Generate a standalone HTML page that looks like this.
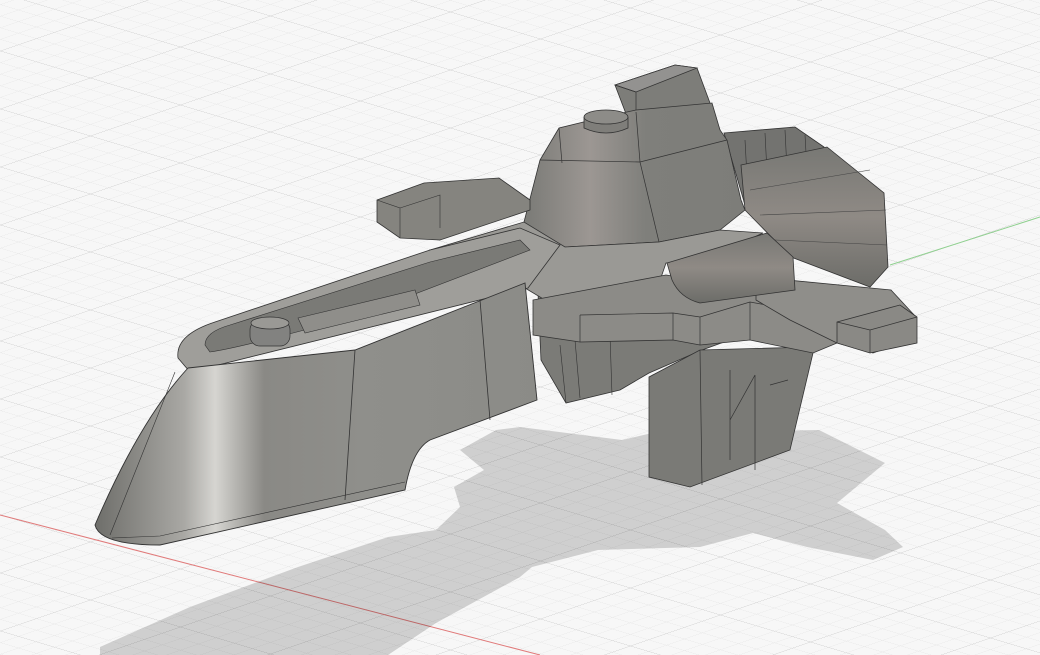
<!DOCTYPE html>
<html><head><meta charset="utf-8"><style>
html,body{margin:0;padding:0;background:#f7f7f7;width:1040px;height:655px;overflow:hidden}
svg{display:block}
</style></head><body>
<svg width="1040" height="655" viewBox="0 0 1040 655" xmlns="http://www.w3.org/2000/svg">
<defs>
<pattern id="g" width="20" height="20" patternUnits="userSpaceOnUse" patternTransform="matrix(0.9 0.27 0.9 -0.31 0 515)">
<path d="M0 0H20M0 0V20" stroke="#e2e2e2" stroke-width="1" fill="none"/>
</pattern>
<pattern id="g5" width="100" height="100" patternUnits="userSpaceOnUse" patternTransform="matrix(0.9 0.27 0.9 -0.31 0 515)">
<path d="M0 0H100M0 0V100" stroke="#c6c6c6" stroke-width="1.1" fill="none"/>
</pattern>
<linearGradient id="nose" x1="95" y1="0" x2="540" y2="0" gradientUnits="userSpaceOnUse">
<stop offset="0" stop-color="#6e6e6a"/><stop offset="0.2" stop-color="#a9a8a4"/><stop offset="0.27" stop-color="#d6d5d1"/><stop offset="0.38" stop-color="#8a8985"/><stop offset="0.6" stop-color="#8f8f8b"/><stop offset="1" stop-color="#8b8b87"/>
</linearGradient>
<linearGradient id="cyl" x1="0" y1="0" x2="0" y2="1">
<stop offset="0" stop-color="#787874"/><stop offset="0.5" stop-color="#8f8a85"/><stop offset="1" stop-color="#6c6c68"/>
</linearGradient>
<linearGradient id="tur" x1="0" y1="0" x2="1" y2="0">
<stop offset="0" stop-color="#7a7a76"/><stop offset="0.3" stop-color="#9c9793"/><stop offset="0.55" stop-color="#7f7f7b"/><stop offset="1" stop-color="#7d7d79"/>
</linearGradient>
</defs>
<rect width="1040" height="655" fill="#f7f7f7"/>
<rect width="1040" height="655" fill="url(#g)"/>
<rect width="1040" height="655" fill="url(#g5)"/>
<line x1="0" y1="515" x2="540" y2="655" stroke="#e07a7a" stroke-width="1"/>
<line x1="890" y1="265" x2="1040" y2="217" stroke="#8fd08f" stroke-width="1"/>
<!-- shadow -->
<path d="M100 655 L100 647 L190 607 L298 567 L388 537 L436 530 L460 507 L454 487 L484 470 L460 450 L496 430 L520 427 L622 440 L652 433 L819 430 L885 463 L837 503 L885 530 L903 547 L873 560 L807 547 L753 533 L700 547 L598 550 L532 567 L520 577 L436 623 L388 655 Z" fill="#000" fill-opacity="0.16"/>
<!-- rear fins -->
<path d="M724 133 L795 127 L824 147 L827 190 L745 205 Z" fill="#737370" stroke="#333" stroke-width="0.8"/>
<path d="M745 140 L748 195 M765 133 L768 192 M785 130 L788 190 M805 135 L808 188" stroke="#333" stroke-width="0.6"/>
<!-- right cylinder -->
<path d="M741 165 L827 147 L884 193 L888 267 L870 287 L791 257 L745 210 Z" fill="url(#cyl)" stroke="#333" stroke-width="0.8"/>
<path d="M750 190 L870 170 M760 215 L886 210 M775 240 L887 245" stroke="#444" stroke-width="0.6"/>
<!-- turret top block -->
<path d="M615 85 L675 65 L697 68 L720 130 L636 140 Z" fill="#7d7d79" stroke="#333" stroke-width="0.8"/>
<path d="M615 85 L675 65 L697 68 L636 92 Z" fill="#939290" stroke="#333" stroke-width="0.7"/>
<path d="M615 85 L636 92 L636 140" stroke="#333" stroke-width="0.7" fill="none"/>
<!-- turret -->
<path d="M524 222 L540 160 L559 128 L600 118 L636 110 L712 103 L720 130 L727 140 L741 200 L745 210 L720 230 L659 242 L565 247 L530 238 Z" fill="url(#tur)" stroke="#333" stroke-width="0.8"/>
<path d="M540 160 L640 162 L727 140 M559 128 L562 163 M640 162 L659 242 M636 112 L640 162" stroke="#333" stroke-width="0.7" fill="none"/>
<path d="M584 117 L584 128 Q606 138 628 128 L628 117" fill="#7f7e7a" stroke="#333" stroke-width="0.8"/>
<ellipse cx="606" cy="117" rx="22" ry="7" fill="#8d8c88" stroke="#333" stroke-width="0.8"/>
<!-- left wing -->
<path d="M377 200 L424 183 L499 178 L530 200 L530 210 L440 240 L400 238 L377 222 Z" fill="#85847f" stroke="#333" stroke-width="0.8"/>
<path d="M377 200 L400 208 L400 238 M400 208 L440 195 L440 228" stroke="#333" stroke-width="0.6" fill="none"/>
<!-- underside mid -->
<path d="M538 293 L749 333 L702 350 L649 373 L620 390 L566 403 L541 360 Z" fill="#7b7b77" stroke="#333" stroke-width="0.8"/>
<path d="M560 345 L566 403 M575 340 L580 398 M610 335 L612 395" stroke="#333" stroke-width="0.6"/>
<!-- hanging block -->
<path d="M649 377 L700 350 L810 347 L813 353 L790 450 L690 487 L649 477 Z" fill="#7a7a76" stroke="#333" stroke-width="0.8"/>
<path d="M700 350 L702 485 M730 370 L730 460 M755 375 L755 470 M730 420 L755 375 M770 385 L788 380" stroke="#333" stroke-width="0.7" fill="none"/>
<!-- deck -->
<path d="M430 250 L524 222 L565 247 L659 242 L720 230 L763 233 L700 262 L666 263 L655 295 L600 300 L545 300 L520 285 Z" fill="#9a9995" stroke="#333" stroke-width="0.8"/>
<!-- lower plate -->
<path d="M533 300 L666 275 L760 290 L837 300 L837 343 L813 353 L750 340 L700 345 L673 340 L580 342 L533 335 Z" fill="#8c8b87" stroke="#333" stroke-width="0.8"/>
<path d="M580 315 L673 313 L700 317 L750 302 L810 313 M580 315 L580 342 M673 313 L673 340 M700 317 L700 345 M750 302 L750 340" stroke="#333" stroke-width="0.7" fill="none"/>
<!-- right arm bits -->
<path d="M756 277 L891 290 L916 317 L916 337 L873 353 L837 343 L790 320 L756 300 Z" fill="#8f8e8a" stroke="#333" stroke-width="0.8"/>
<path d="M837 322 L900 305 L917 317 L917 343 L870 353 L837 343 Z" fill="#8a8985" stroke="#333" stroke-width="0.8"/>
<path d="M837 322 L870 330 L917 317 M870 330 L870 353" stroke="#333" stroke-width="0.7" fill="none"/>
<!-- half cylinder -->
<path d="M667 263 L767 233 L793 257 L795 290 L700 303 Q680 298 672 280 Z" fill="url(#cyl)" stroke="#333" stroke-width="0.8"/>
<!-- nose top -->
<path d="M178 358 Q175 335 215 322 L430 250 L520 228 L560 245 L528 288 L190 372 Z" fill="#9f9e9a" stroke="#333" stroke-width="0.8"/>
<path d="M205 345 Q205 332 230 325 L430 262 L520 240 L530 250 L360 315 Q240 348 210 352 Z" fill="#7a7a76" stroke="#333" stroke-width="0.6"/>
<path d="M298 318 L415 290 L420 305 L305 333 Z" fill="#8f8e8a" stroke="#333" stroke-width="0.6"/>
<rect x="250" y="320" width="40" height="26" rx="10" fill="#828280" stroke="#333" stroke-width="0.7"/>
<ellipse cx="270" cy="323" rx="19" ry="6" fill="#9a9995" stroke="#333" stroke-width="0.7"/>
<!-- nose side -->
<path d="M188 368 L355 350 L525 283 L537 400 L430 440 Q412 450 405 490 L160 545 Q100 545 95 525 Q140 420 188 368 Z" fill="url(#nose)" stroke="#333" stroke-width="0.9"/>
<path d="M355 350 L345 500 M480 300 L490 420" stroke="#333" stroke-width="0.8" fill="none"/>
<path d="M110 535 L175 372" stroke="#333" stroke-width="0.6" fill="none"/>
<path d="M112 538 L160 536 L405 482" stroke="#333" stroke-width="0.6" fill="none"/>
</svg>
</body></html>
